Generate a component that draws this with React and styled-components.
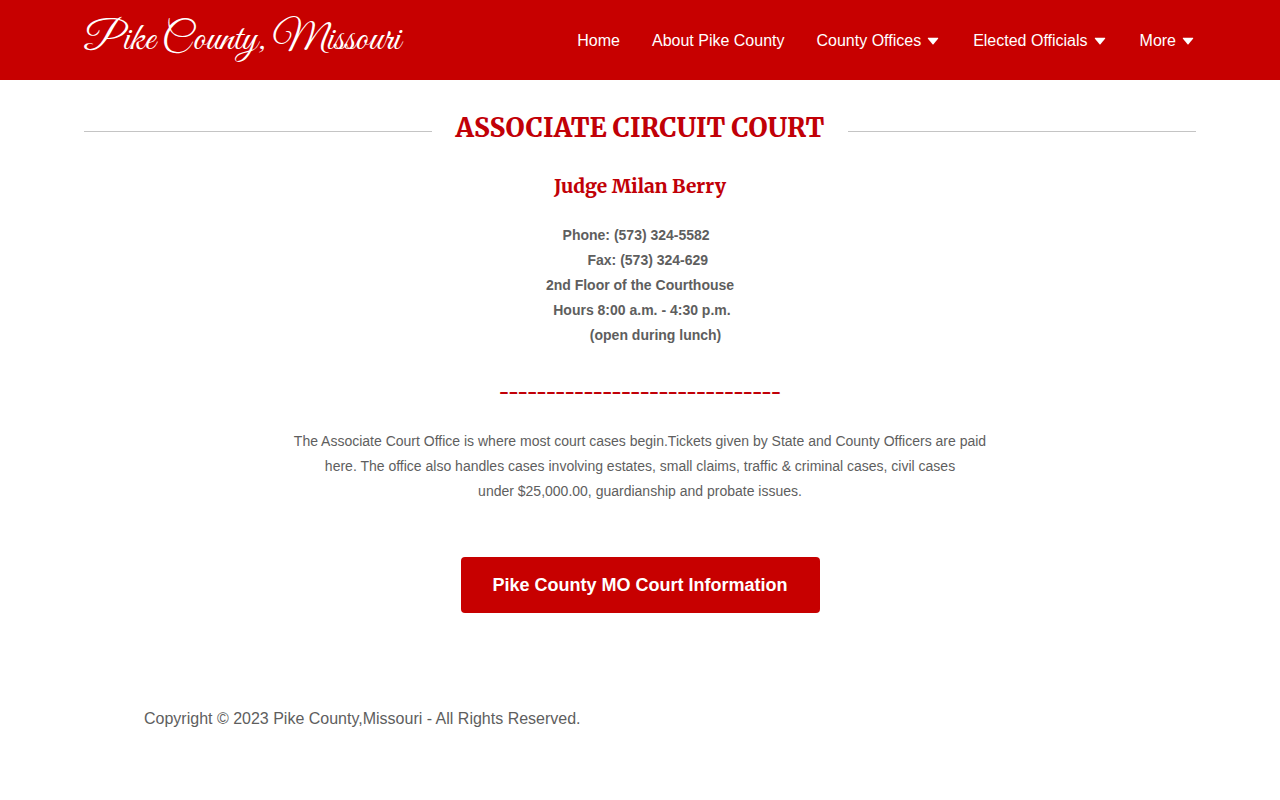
import styled, { createGlobalStyle } from 'styled-components'

const colors = {
  primary: '#c70000',
  heading: '#c10007',
  text: '#5e5e5e',
  line: '#c4c4c4',
}

const GlobalStyle = createGlobalStyle`
  * {
    box-sizing: border-box;
  }
  body {
    margin: 0;
    background-color: #ffffff;
    color: ${colors.text};
    font-family: Arial, 'Liberation Sans', sans-serif;
    font-size: 16px;
  }
`

const Header = styled.header`
  background-color: ${colors.primary};
`

const Container = styled.div`
  width: 100%;
  max-width: 1160px;
  margin: 0 auto;
  padding: 0 24px;
`

const HeaderContent = styled(Container)`
  display: flex;
  align-items: center;
  justify-content: space-between;
  min-height: 80px;
`

const Logo = styled.a`
  color: #ffffff;
  font-family: 'Great Vibes', 'Liberation Serif', cursive;
  font-size: 40px;
  line-height: 48px;
  text-decoration: none;
  white-space: nowrap;
`

const Nav = styled.nav`
  display: flex;
  gap: 32px;
  padding-top: 2px;
`

const NavLink = styled.a`
  color: #ffffff;
  line-height: 24px;
  text-decoration: none;
  white-space: nowrap;
`

const NavButton = styled.button`
  display: flex;
  align-items: center;
  gap: 4px;
  padding: 0;
  border: none;
  background: none;
  color: #ffffff;
  font: inherit;
  line-height: 24px;
  white-space: nowrap;
  cursor: pointer;
`

const TitleRow = styled.div`
  display: flex;
  align-items: center;
  gap: 24px;
  padding-top: 28px;
`

const Line = styled.span`
  flex: 1;
  height: 1px;
  margin-top: 6px;
  background-color: ${colors.line};
`

const Title = styled.h1`
  margin: 0;
  color: ${colors.heading};
  font-family: Merriweather, 'DejaVu Serif Condensed', 'DejaVu Serif', serif;
  font-size: 26px;
  font-weight: 800;
  line-height: 40px;
  text-align: center;
  text-transform: uppercase;
`

const Content = styled.section`
  display: flex;
  flex-direction: column;
  align-items: center;
  text-align: center;
`

const Subtitle = styled.h2`
  margin: 24px 0 0;
  color: ${colors.heading};
  font-family: Merriweather, 'DejaVu Serif Condensed', 'DejaVu Serif', serif;
  font-size: 19px;
  font-weight: 800;
  line-height: 28px;
`

const Divider = styled(Subtitle)`
  margin-top: 30px;
`

const Details = styled.p`
  margin: 23px 0 0;
  font-size: 14px;
  font-weight: bold;
  line-height: 25px;
  white-space: pre;
`

const Description = styled.p`
  max-width: 712px;
  margin: 23px 0 0;
  font-size: 14px;
  line-height: 25px;
`

const CourtLink = styled.a`
  margin-top: 53px;
  padding: 16px 32px;
  border-radius: 4px;
  background-color: ${colors.primary};
  color: #ffffff;
  font-size: 18px;
  font-weight: bold;
  line-height: 24px;
  text-decoration: none;
`

const Footer = styled.footer`
  width: 100%;
  max-width: 1040px;
  margin: 0 auto;
  padding: 92px 24px 66px;
  line-height: 28px;
`

const Copyright = styled.p`
  margin: 0;
`

const navItems = [
  { label: 'Home' },
  { label: 'About Pike County' },
  { label: 'County Offices', hasMenu: true },
  { label: 'Elected Officials', hasMenu: true },
  { label: 'More', hasMenu: true },
]

const details = [
  'Phone: (573) 324-5582\u00a0\u00a0',
  '\u00a0\u00a0\u00a0\u00a0Fax: (573) 324-629',
  '2nd Floor of the Courthouse',
  '\u00a0Hours 8:00 a.m. - 4:30 p.m.',
  '\u00a0\u00a0\u00a0\u00a0\u00a0\u00a0\u00a0\u00a0(open during lunch)',
]

function Caret() {
  return (
    <svg width="16" height="16" viewBox="0 0 16 16" fill="currentColor" aria-hidden="true">
      <path d="M3.4 4.8h9.2c.6 0 .8.5.4 1l-4.5 5.4a.7.7 0 0 1-1 0L3 5.800c-.4-.5-.2-1 .4-1z" />
    </svg>
  )
}

function App() {
  return (
    <>
      <GlobalStyle />
      <Header>
        <HeaderContent>
          <Logo href="#">Pike County, Missouri</Logo>
          <Nav>
            {navItems.map(({ label, hasMenu }) =>
              hasMenu ? (
                <NavButton key={label} type="button">
                  {label}
                  <Caret />
                </NavButton>
              ) : (
                <NavLink key={label} href="#">
                  {label}
                </NavLink>
              )
            )}
          </Nav>
        </HeaderContent>
      </Header>
      <main>
        <Container>
          <TitleRow>
            <Line />
            <Title>Associate Circuit Court</Title>
            <Line />
          </TitleRow>
          <Content>
            <Subtitle>Judge Milan Berry</Subtitle>
            <Details>{details.join('\n')}</Details>
            <Divider as="div">{'-'.repeat(30)}</Divider>
            <Description>
              The Associate Court Office is where most court cases begin.Tickets given by State and
              County Officers are paid here. The office also handles cases involving estates, small
              claims, traffic &amp; criminal cases, civil cases under&nbsp;$25,000.00, guardianship
              and probate issues.
            </Description>
            <CourtLink href="#">Pike County MO Court Information</CourtLink>
          </Content>
        </Container>
      </main>
      <Footer>
        <Copyright>Copyright © 2023 Pike County,Missouri - All Rights Reserved.</Copyright>
      </Footer>
    </>
  )
}

export default App
